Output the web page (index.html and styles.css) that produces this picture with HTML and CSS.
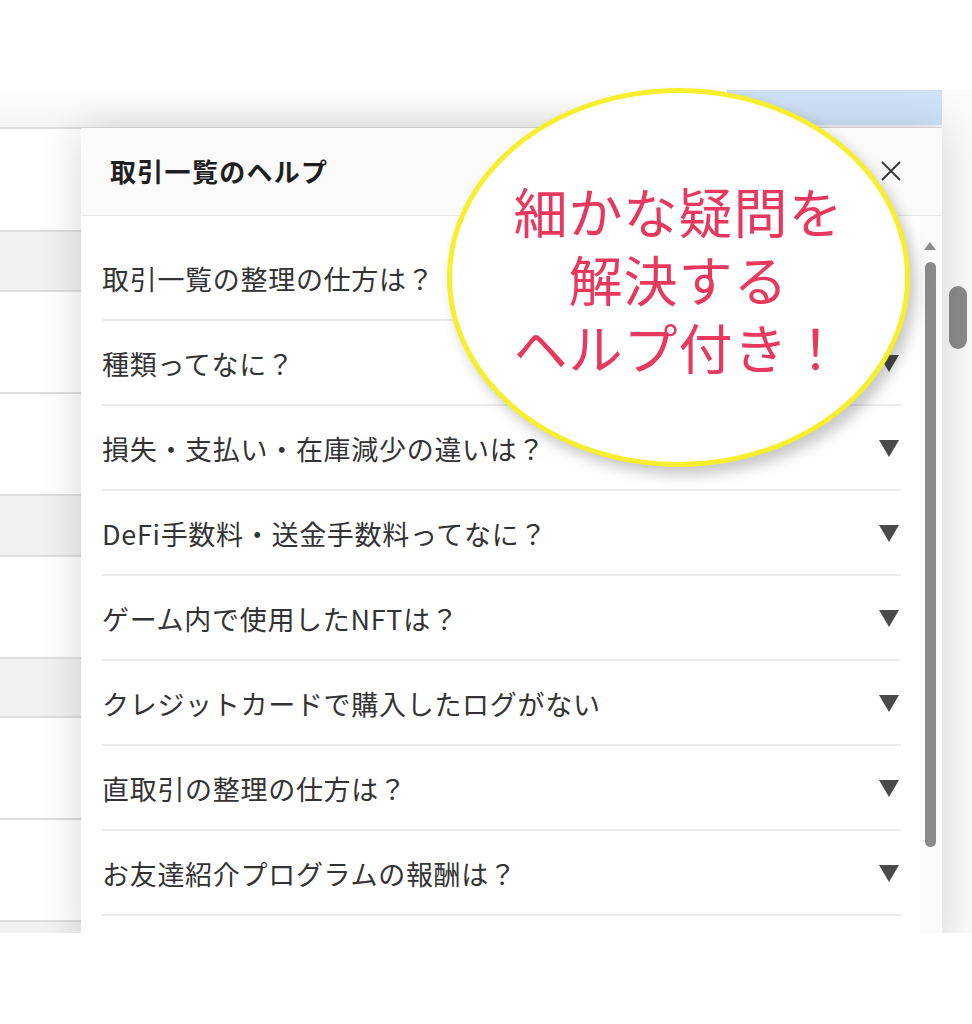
FILE: index.html
```html
<!DOCTYPE html>
<html lang="ja">
<head>
<meta charset="utf-8">
<title>取引一覧のヘルプ</title>
<link rel="stylesheet" href="styles.css">
</head>
<body>
<div class="screen">
  <div class="main">
    <div class="topbar"><div class="topbar-blue"></div></div>
    <div class="rows">
      <div class="row h103"></div>
      <div class="row grey h60"></div>
      <div class="row h102"></div>
      <div class="row h102"></div>
      <div class="row grey h61"></div>
      <div class="row h102"></div>
      <div class="row grey h59"></div>
      <div class="row h102"></div>
      <div class="row h102"></div>
      <div class="row grey h60"></div>
    </div>

    <div class="modal">
      <div class="modal-head">
        <h2 class="modal-title">取引一覧のヘルプ</h2>
        <svg class="close" width="22" height="22" viewBox="0 0 22 22"><path d="M2 2L20 20M20 2L2 20" stroke="#333" stroke-width="1.8" fill="none"/></svg>
      </div>
      <div class="modal-body">
        <ul class="faq">
          <li class="faq-item"><span>取引一覧の整理の仕方は？</span><i class="tri"></i></li>
          <li class="faq-item"><span>種類ってなに？</span><i class="tri"></i></li>
          <li class="faq-item"><span>損失・支払い・在庫減少の違いは？</span><i class="tri"></i></li>
          <li class="faq-item"><span>DeFi手数料・送金手数料ってなに？</span><i class="tri"></i></li>
          <li class="faq-item"><span>ゲーム内で使用したNFTは？</span><i class="tri"></i></li>
          <li class="faq-item"><span>クレジットカードで購入したログがない</span><i class="tri"></i></li>
          <li class="faq-item"><span>直取引の整理の仕方は？</span><i class="tri"></i></li>
          <li class="faq-item"><span>お友達紹介プログラムの報酬は？</span><i class="tri"></i></li>
        </ul>
        <div class="inner-track">
          <i class="up-arrow"></i>
          <div class="inner-thumb"></div>
        </div>
      </div>
    </div>
  </div>
  <div class="page-track"><div class="page-thumb"></div></div>
</div>

<div class="bubble">
  <p class="bubble-text">細かな疑問を<br>解決する<br>ヘルプ付き！</p>
</div>
</body>
</html>
```

FILE: styles.css
```css
html, body {
  margin: 0;
  padding: 0;
  background: #ffffff;
}
body {
  position: relative;
  width: 972px;
  height: 1024px;
  overflow: hidden;
  font-family: "Noto Sans CJK JP", "Noto Sans", sans-serif;
}
.screen {
  margin-top: 90px;
  height: 843px;
  display: flex;
  overflow: hidden;
  background: #fafafa;
}
.main {
  position: relative;
  width: 942px;
  flex: none;
  background: #ffffff;
}
.topbar {
  height: 37px;
  display: flex;
  justify-content: flex-end;
  background: linear-gradient(#ffffff, #f5f5f5);
}
.topbar-blue {
  width: 215px;
  height: 35px;
  background: #cfe2f8;
}
.rows {
  display: flex;
  flex-direction: column;
}
.row {
  border-top: 2px solid #dedede;
  background: #ffffff;
}
.row.grey { background: #f1f1f1; }
.h103 { height: 101px; }
.h102 { height: 100px; }
.h60 { height: 58px; }
.h61 { height: 59px; }
.h59 { height: 57px; }

.modal {
  position: absolute;
  left: 81px;
  top: 38px;
  width: 861px;
  height: 820px;
  background: #ffffff;
  box-shadow: 0 0 40px rgba(0, 0, 0, 0.16);
  display: flex;
  flex-direction: column;
}
.modal-head {
  height: 88px;
  flex: none;
  box-sizing: border-box;
  display: flex;
  align-items: center;
  justify-content: space-between;
  padding: 0 40px 2px 29px;
  background: #fafafa;
  border-bottom: 1px solid #e8e8e8;
}
.modal-title {
  margin: 0;
  font-size: 26px;
  font-weight: 700;
  color: #1f1f1f;
  letter-spacing: 1.3px;
}
.modal-body {
  flex: 1;
  display: flex;
}
.faq {
  list-style: none;
  margin: 0;
  padding: 20px 19px 0 21px;
  flex: 1;
}
.faq-item {
  height: 85px;
  box-sizing: border-box;
  border-bottom: 2px solid #ebebeb;
  display: flex;
  align-items: center;
  justify-content: space-between;
  font-size: 27px;
  letter-spacing: 0.7px;
  color: #333333;
  padding-top: 2px;
}
.tri {
  width: 0;
  height: 0;
  margin-right: 2px;
  border-left: 10px solid transparent;
  border-right: 10px solid transparent;
  border-top: 17px solid #4a4a4a;
}
.inner-track {
  width: 22px;
  flex: none;
  background: #fafafa;
  display: flex;
  flex-direction: column;
  align-items: center;
  padding-top: 26px;
  box-sizing: border-box;
}
.up-arrow {
  width: 0;
  height: 0;
  border-left: 6px solid transparent;
  border-right: 6px solid transparent;
  border-bottom: 8px solid #8c8c8c;
  margin-left: -2px;
}
.inner-thumb {
  margin-top: 12px;
  margin-left: -2px;
  width: 11px;
  height: 585px;
  border-radius: 6px;
  background: #8a8a8a;
}
.page-track {
  width: 30px;
  flex: none;
  background: #fafafa;
  padding-top: 196px;
  box-sizing: border-box;
}
.page-thumb {
  margin-left: 7px;
  width: 18px;
  height: 63px;
  border-radius: 9px;
  background: #8a8a8a;
}

.bubble {
  position: absolute;
  left: 447px;
  top: 88px;
  width: 463px;
  height: 379px;
  box-sizing: border-box;
  border: 5px solid #f7ef2e;
  border-radius: 50%;
  background: #ffffff;
  box-shadow: 6px 8px 14px rgba(0, 0, 0, 0.22);
  display: flex;
  align-items: center;
  justify-content: center;
}
.bubble-text {
  margin: 2px 0 0 0;
  font-size: 54px;
  line-height: 68px;
  color: #e8385e;
  text-align: center;
  letter-spacing: 1px;
}
```
